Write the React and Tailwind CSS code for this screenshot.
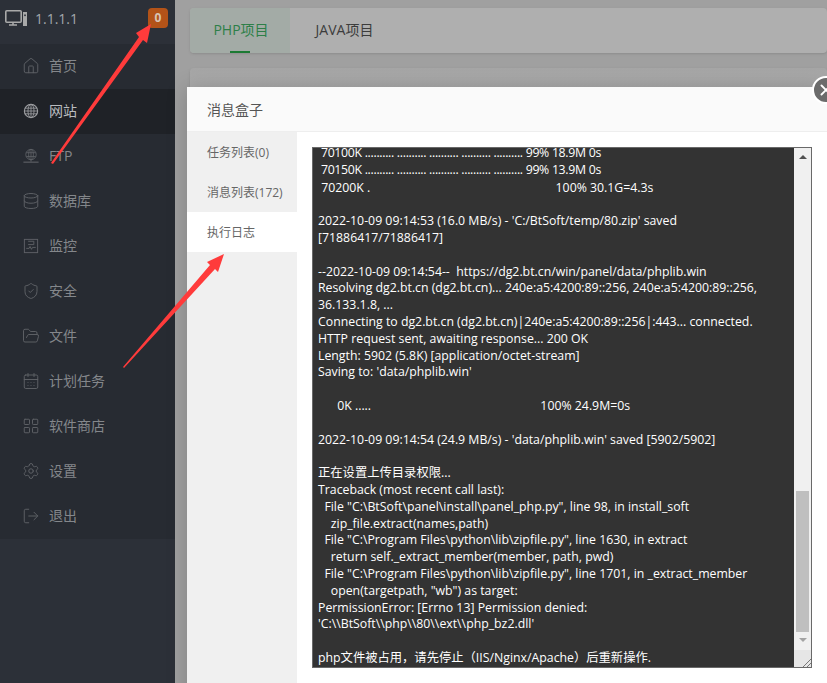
import React from "react";
import { Home, Database, ShieldCheck, FolderOpen, CalendarDays, LayoutGrid, Settings, LogOut, X } from "lucide-react";

const font = { fontFamily: '"Open Sans","Noto Sans CJK SC",sans-serif' };

const Web = ({ strokeWidth, ...p }) => (
  <svg viewBox="-1.500 -1.500 19 19" fill="none" stroke="currentColor" strokeWidth="0.9" {...p}>
    <circle cx="8" cy="8" r="7" strokeWidth="1.2" />
    <ellipse cx="8" cy="8" rx="3.200" ry="7" />
    <path d="M1.500 5h13M1 8h14M1.500 11h13M8 1v14" />
  </svg>
);
const Ftp = ({ strokeWidth, ...p }) => (
  <svg viewBox="-1.500 -1.500 19 19" fill="none" stroke="currentColor" strokeWidth="0.9" {...p}>
    <circle cx="8" cy="6.500" r="5.500" />
    <ellipse cx="8" cy="6.500" rx="2.500" ry="5.500" />
    <path d="M3 4.500h10M3 8.500h10M8 1v13" />
    <path d="M0 14.500h16" strokeWidth="1.200" />
  </svg>
);
const Pulse = ({ strokeWidth, ...p }) => (
  <svg viewBox="-1.500 -1.500 19 19" fill="none" stroke="currentColor" strokeWidth="1" {...p}>
    <rect x="1" y="1" width="14" height="14" />
    <path d="M3 10.500h3l1-2 1.500 3 1-2h3.500M5 3h6v3.500H5" />
  </svg>
);
const Monitor = (p) => (
  <svg viewBox="0 0 22 16" fill="none" {...p}>
    <rect x="0.800" y="0.800" width="15.400" height="11.400" rx="1" stroke="currentColor" strokeWidth="1.600" />
    <path d="M4 15h8M8 13v2" stroke="currentColor" strokeWidth="1.600" />
    <rect x="18" y="2" width="4" height="14" fill="currentColor" />
    <rect x="19.200" y="4.500" width="1.600" height="1.600" fill="#2c3038" />
  </svg>
);

const menu = [
  ["首页", Home], ["网站", Web], ["FTP", Ftp], ["数据库", Database], ["监控", Pulse],
  ["安全", ShieldCheck], ["文件", FolderOpen], ["计划任务", CalendarDays], ["软件商店", LayoutGrid], ["设置", Settings], ["退出", LogOut],
];

const log = ` 70200K .                                                          100% 30.1G=4.3s

2022-10-09 09:14:53 (16.0 MB/s) - 'C:/BtSoft/temp/80.zip' saved
[71886417/71886417]

--2022-10-09 09:14:54--  https://dg2.bt.cn/win/panel/data/phplib.win
Resolving dg2.bt.cn (dg2.bt.cn)... 240e:a5:4200:89::256, 240e:a5:4200:89::256,
36.133.1.8, ...
Connecting to dg2.bt.cn (dg2.bt.cn)|240e:a5:4200:89::256|:443... connected.
HTTP request sent, awaiting response... 200 OK
Length: 5902 (5.8K) [application/octet-stream]
Saving to: 'data/phplib.win'

      0K .....                                                     100% 24.9M=0s

2022-10-09 09:14:54 (24.9 MB/s) - 'data/phplib.win' saved [5902/5902]

正在设置上传目录权限...
Traceback (most recent call last):
  File "C:\\BtSoft\\panel\\install\\panel_php.py", line 98, in install_soft
    zip_file.extract(names,path)
  File "C:\\Program Files\\python\\lib\\zipfile.py", line 1630, in extract
    return self._extract_member(member, path, pwd)
  File "C:\\Program Files\\python\\lib\\zipfile.py", line 1701, in _extract_member
    open(targetpath, "wb") as target:
PermissionError: [Errno 13] Permission denied:
'C:\\\\BtSoft\\\\php\\\\80\\\\ext\\\\php_bz2.dll'

php文件被占用，请先停止（IIS/Nginx/Apache）后重新操作.`;

export default function App() {
  return (
    <div style={font} className="relative flex h-[683px] w-[827px] overflow-hidden bg-[#a0a0a0]">
      <aside className="flex h-full w-[175px] shrink-0 flex-col bg-[#2c3038]">
        <div className="flex h-[44px] items-center pb-[8px] pl-[5px] pr-[7px]">
          <Monitor className="h-[16px] w-[22px] text-[#a9a9a9]" />
          <span className="ml-[8px] text-[14px] text-[#a3a8ad]">1.1.1.1</span>
          <span className="ml-auto flex h-[20px] w-[20px] items-center justify-center rounded-[4px] bg-[#b35318] text-[12px] font-bold text-[#d8c4b4]">0</span>
        </div>
        <nav className="bg-[#272b32]">
          {menu.map(([label, I]) => {
            const active = label === "网站";
            return (
              <div key={label} className={`flex h-[45px] items-center pb-[2px] pl-[23px] text-[14px] ${active ? "bg-[#1f2227] text-[#b9bcbf]" : "text-[#84878b]"}`}>
                <span className="flex h-[18px] w-[15px] items-center justify-center">
                  <I className={`h-[18px] w-[18px] shrink-0 ${active ? "text-[#9c9ea1]" : "text-[#5e6166]"}`} strokeWidth={1.3} />
                </span>
                <span className="ml-[11px]">{label}</span>
              </div>
            );
          })}
        </nav>
      </aside>

      <main className="min-w-0 flex-1 pl-[15px] pt-[8px]">
        <div className="flex h-[45px] overflow-hidden rounded-[4px] bg-[#afafaf] shadow-sm">
          <div className="relative flex w-[100px] items-center justify-center bg-[#a3aba6] pb-[2px] pl-[2px] text-[14px] text-[#2d7f48]">
            PHP项目
            <span className="absolute bottom-0 left-[40px] h-[2px] w-[20px] bg-[#1c7a33]" />
          </div>
          <div className="flex w-[109px] items-center justify-center pb-[2px] text-[14px] text-[#3c3c3c]">JAVA项目</div>
        </div>
        <div className="mt-[15px] h-[40px] rounded-[4px] bg-gradient-to-b from-[#a6a6a6] to-[#b0b0b0] shadow-sm" />
      </main>

      <section className="absolute left-[187px] top-[87px] h-[640px] w-[640px] bg-white shadow-[0_1px_20px_rgba(0,0,0,0.2)]">
        <header className="flex h-[45px] items-center border-b border-[#eeeeee] bg-[#fafafa] pl-[20px] text-[14px] text-[#555]">消息盒子</header>
        <div className="flex">
          <ul className="h-[600px] w-[110px] bg-[#f0f0f0] text-[12px] text-[#666]">
            <li className="flex h-[40px] items-center pl-[20px] pt-[2px]">任务列表(0)</li>
            <li className="flex h-[40px] items-center pl-[20px] pt-[2px]">消息列表(172)</li>
            <li className="flex h-[40px] items-center bg-white pl-[20px] pt-[2px]">执行日志</li>
          </ul>
          <div className="ml-[15px] mt-[15px] flex h-[521px] w-[500px] border border-[#696969] bg-[#333333]">
            <pre style={font} className="-mt-[3px] min-w-0 flex-1 overflow-hidden whitespace-pre px-[5px] text-[12.3px] leading-[16.8px] text-white">
              <span className="block tracking-[-0.3px]">{" 70100K .......... .......... .......... .......... .......... 99% 18.9M 0s"}</span>
              <span className="block tracking-[-0.3px]">{" 70150K .......... .......... .......... .......... .......... 99% 13.9M 0s"}</span>
              <span className="mt-[1px] block">{log}</span>
            </pre>
            <div className="flex w-[17px] shrink-0 flex-col items-center bg-[#f0f0f0]">
              <span className="mt-[7px] h-0 w-0 border-x-[4px] border-b-[4px] border-x-transparent border-b-[#505050]" />
              <div className="mt-[332px] h-[141px] w-[13px] bg-[#bfbfbf]" />
              <span className="mt-[6px] h-0 w-0 border-x-[4px] border-t-[4px] border-x-transparent border-t-[#a3a3a3]" />
              <div className="mt-auto flex h-[17px] w-full items-end justify-end bg-[#e6e6e6]">
                <svg className="h-[9px] w-[9px]" viewBox="0 0 9 9" stroke="#777"><path d="M1 9l8-8M5 9l4-4" /></svg>
              </div>
            </div>
          </div>
        </div>
      </section>

      <span className="absolute left-[812px] top-[76px] flex h-[28px] w-[28px] items-center justify-center rounded-full border-[2px] border-white bg-[#6b6b6b] text-white">
        <X size={18} strokeWidth={2.5} />
      </span>

      <svg className="pointer-events-none absolute left-0 top-0" width="827" height="683" viewBox="0 0 827 683">
        <polygon fill="#ff3b3b" points="51,163 139,37 136,33 151,24 147,43 143,40 53,164" />
        <polygon fill="#ff3b3b" points="123,367 210,265 207,262 224,254 218,272 215,269 124,368" />
      </svg>
    </div>
  );
}
